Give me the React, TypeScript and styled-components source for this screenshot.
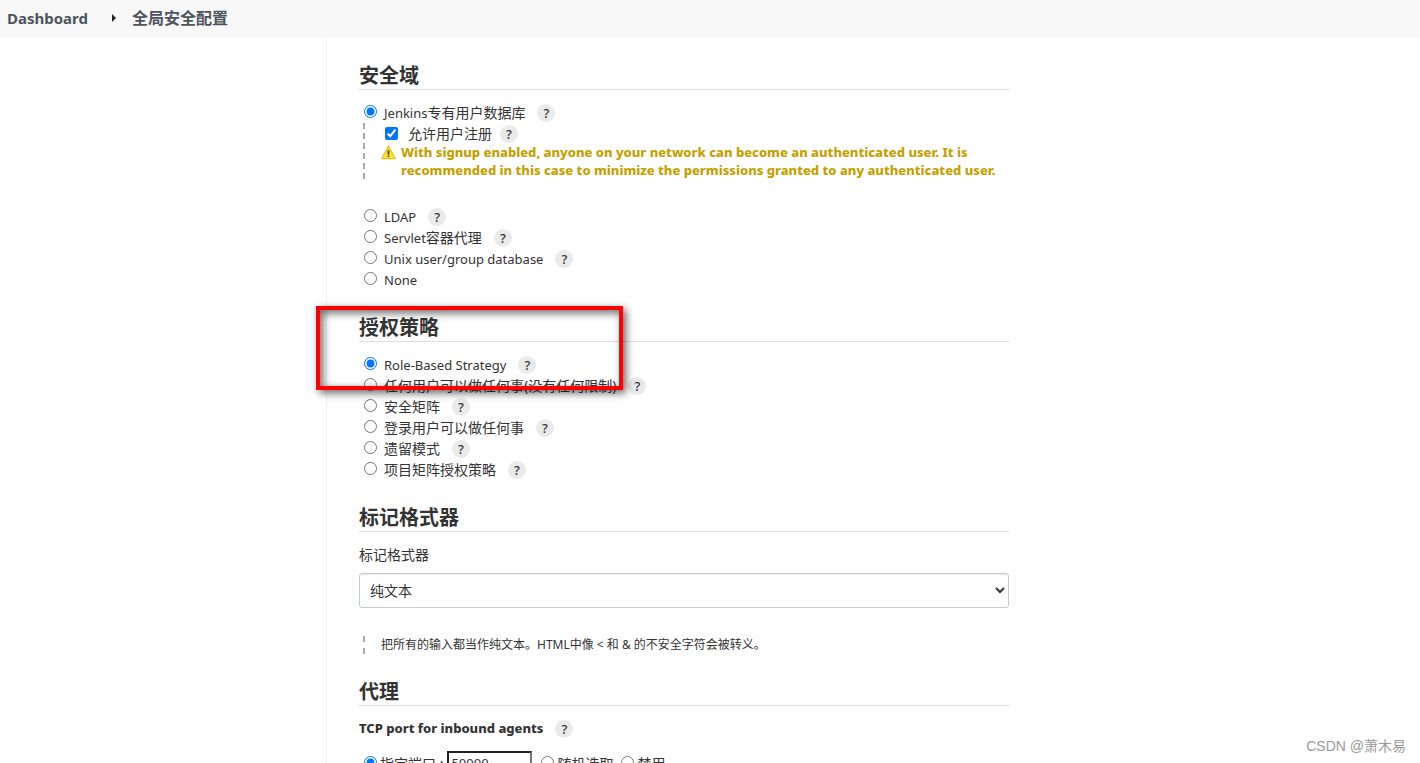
import React from "react";
import styled, { createGlobalStyle } from "styled-components";

const GlobalStyle = createGlobalStyle`
  * { box-sizing: border-box; }
  body {
    margin: 0;
    background: #fff;
    color: #333;
    font: 14px/21px "Noto Sans", "Noto Sans CJK SC", sans-serif;
  }
`;

const Page = styled.div`
  position: relative;
  display: flex;
  flex-direction: column;
  height: 100vh;
  overflow: hidden;
`;

const Breadcrumbs = styled.nav`
  display: flex;
  align-items: center;
  flex: none;
  height: 38px;
  padding: 0 7px 2px;
  background: #f8f8f8;
  font-weight: 700;
`;

const Crumb = styled.a<{ $size: number }>`
  color: #4d545d;
  font-size: ${(p) => p.$size}px;
  text-decoration: none;
`;

const CrumbArrow = styled.svg`
  width: 4px;
  height: 8px;
  margin: 0 16px 0 24px;
`;

const Body = styled.div`
  display: flex;
  flex: 1;
  min-height: 0;
`;

const SidePanel = styled.aside`
  flex: 0 0 327px;
  border-right: 1px solid #f0f0f0;
`;

const Main = styled.main`
  flex: 1;
  min-width: 0;
  padding: 0 32px;
`;

const Form = styled.form`
  max-width: 650px;
`;

const Section = styled.section`
  position: relative;
  padding-top: 23px;
`;

const Heading = styled.h2`
  height: 29px;
  margin: 0 0 12px;
  border-bottom: 1px solid #dcdfe0;
  font-size: 20px;
  line-height: 30px;
  font-weight: 700;
`;

const Row = styled.div`
  display: flex;
  align-items: center;
  height: 21px;
`;

const Latin = styled.span`
  font-size: 13px;
`;

const Choice = styled.input`
  width: 13px;
  height: 13px;
  margin: 0 7px 3px 5px;
`;

const Tick = styled.input`
  width: 13px;
  height: 13px;
  margin: 0 10px 0 0;
`;

const Help = styled.button<{ $gap: number }>`
  width: 18px;
  height: 18px;
  margin-left: ${(p) => p.$gap}px;
  padding: 0;
  border: 0;
  border-radius: 50%;
  background: #eaeaea;
  color: #333;
  font: 500 13px/18px "Noto Sans", sans-serif;
  text-align: center;
`;

const Nested = styled.div`
  margin: 0 0 27px 4px;
  padding-left: 22px;
  background: repeating-linear-gradient(#aaa 0 6px, transparent 6px 10px) left / 2px 100% no-repeat;
`;

const Warning = styled.p`
  display: flex;
  gap: 5px;
  margin: -1px 0 0 -4px;
  color: #c4a000;
  font-size: 13px;
  font-weight: 800;
  line-height: 18px;
`;

const WarningIcon = styled.svg`
  flex: none;
  width: 15px;
  height: 15px;
  margin-top: 2px;
`;

const FieldLabel = styled.label`
  display: block;
  margin-bottom: 8px;
`;

const Select = styled.select`
  display: block;
  width: 100%;
  height: 35px;
  padding: 0 6px;
  border: 1px solid #c3ccd1;
  border-radius: 3px;
  box-shadow: inset 0 1px 1px rgba(0, 0, 0, 0.08);
  background: #fff;
  color: #333;
  font: inherit;
`;

const Note = styled.div`
  margin: 28px 0 0 4px;
  padding-left: 18px;
  background: repeating-linear-gradient(#aaa 0 6px, transparent 6px 12px) left / 2px 100% no-repeat;
  font-size: 12px;
  line-height: 18px;
`;

const PortTitle = styled(Row)`
  margin-bottom: 12px;
  font-size: 13px;
  font-weight: 800;
`;

const PortRow = styled.div`
  display: flex;
  align-items: center;
  height: 24px;
`;

const PortChoice = styled.input`
  width: 13px;
  height: 13px;
  margin: 0 3px 2px 5px;

  label + & {
    margin-left: 8px;
  }
`;

const PortInput = styled.input`
  width: 85px;
  height: 24px;
  margin: 0 4px;
  padding: 1px 2px;
  border: 2px inset #767676;
  color: #333;
  font: inherit;
  font-size: 13px;
`;

const Highlight = styled.div`
  position: absolute;
  top: 16px;
  left: -43px;
  width: 307px;
  height: 84px;
  border: 4px solid #f00;
  box-shadow: 3px 3px 8px rgba(0, 0, 0, 0.6), inset 3px 3px 8px rgba(0, 0, 0, 0.6);
  pointer-events: none;
`;

const Watermark = styled.div`
  position: absolute;
  right: 14px;
  bottom: 7px;
  color: #999;
  font: 14px/20px "Liberation Sans", "Noto Sans CJK SC", sans-serif;
`;

interface Option {
  id: string;
  latin?: string;
  label?: string;
  help?: boolean;
  checked?: boolean;
}

const realms: Option[] = [
  { id: "ldap", latin: "LDAP", help: true },
  { id: "servlet", latin: "Servlet", label: "容器代理", help: true },
  { id: "unix", latin: "Unix user/group database", help: true },
  { id: "none", latin: "None" },
];

const strategies: Option[] = [
  { id: "role", latin: "Role-Based Strategy", help: true, checked: true },
  { id: "anyone", label: "任何用户可以做任何事(没有任何限制)", help: true },
  { id: "matrix", label: "安全矩阵", help: true },
  { id: "logged-in", label: "登录用户可以做任何事", help: true },
  { id: "legacy", label: "遗留模式", help: true },
  { id: "project-matrix", label: "项目矩阵授权策略", help: true },
];

function OptionRow({ group, option }: { group: string; option: Option }) {
  return (
    <Row>
      <Choice type="radio" name={group} id={option.id} defaultChecked={option.checked} />
      <label htmlFor={option.id}>
        {option.latin && <Latin>{option.latin}</Latin>}
        {option.label}
      </label>
      {option.help && <Help type="button" $gap={12}>?</Help>}
    </Row>
  );
}

export default function App() {
  return (
    <Page>
      <GlobalStyle />
      <Breadcrumbs>
        <Crumb href="#" $size={15}>Dashboard</Crumb>
        <CrumbArrow viewBox="0 0 4 8" aria-hidden="true">
          <path d="M0 0L4 4L0 8Z" fill="#222" />
        </CrumbArrow>
        <Crumb href="#" $size={16}>全局安全配置</Crumb>
      </Breadcrumbs>
      <Body>
        <SidePanel />
        <Main>
          <Form>
            <Section>
              <Heading>安全域</Heading>
              <OptionRow
                group="realm"
                option={{ id: "own", latin: "Jenkins", label: "专有用户数据库", help: true, checked: true }}
              />
              <Nested>
                <Row>
                  <Tick type="checkbox" id="signup" defaultChecked />
                  <label htmlFor="signup">允许用户注册</label>
                  <Help type="button" $gap={8}>?</Help>
                </Row>
                <Warning>
                  <WarningIcon viewBox="0 0 14 14" aria-hidden="true">
                    <path d="M7 .9L13.300 12.700H.7Z" fill="#fbe62f" stroke="#dcc11c" strokeLinejoin="round" />
                    <path d="M6 4.800h2l-.3 4.200H6.300zM6.200 9.800h1.600v1.500H6.200z" fill="#554d1c" />
                  </WarningIcon>
                  <span>
                    With signup enabled, anyone on your network can become an authenticated user. It is
                    <br />
                    recommended in this case to minimize the permissions granted to any authenticated user.
                  </span>
                </Warning>
              </Nested>
              {realms.map((o) => <OptionRow key={o.id} group="realm" option={o} />)}
            </Section>
            <Section>
              <Heading>授权策略</Heading>
              {strategies.map((o) => <OptionRow key={o.id} group="strategy" option={o} />)}
              <Highlight />
            </Section>
            <Section>
              <Heading>标记格式器</Heading>
              <FieldLabel htmlFor="formatter">标记格式器</FieldLabel>
              <Select id="formatter">
                <option>纯文本</option>
              </Select>
              <Note>把所有的输入都当作纯文本。HTML中像 &lt; 和 &amp; 的不安全字符会被转义。</Note>
            </Section>
            <Section>
              <Heading>代理</Heading>
              <PortTitle>
                TCP port for inbound agents
                <Help type="button" $gap={12}>?</Help>
              </PortTitle>
              <PortRow>
                <PortChoice type="radio" name="port" id="fixed" defaultChecked />
                <label htmlFor="fixed">指定端口 :</label>
                <PortInput type="text" aria-label="指定端口" defaultValue="50000" />
                <PortChoice type="radio" name="port" id="random" />
                <label htmlFor="random">随机选取</label>
                <PortChoice type="radio" name="port" id="disabled" />
                <label htmlFor="disabled">禁用</label>
              </PortRow>
            </Section>
          </Form>
        </Main>
      </Body>
      <Watermark>CSDN @萧木易</Watermark>
    </Page>
  );
}
